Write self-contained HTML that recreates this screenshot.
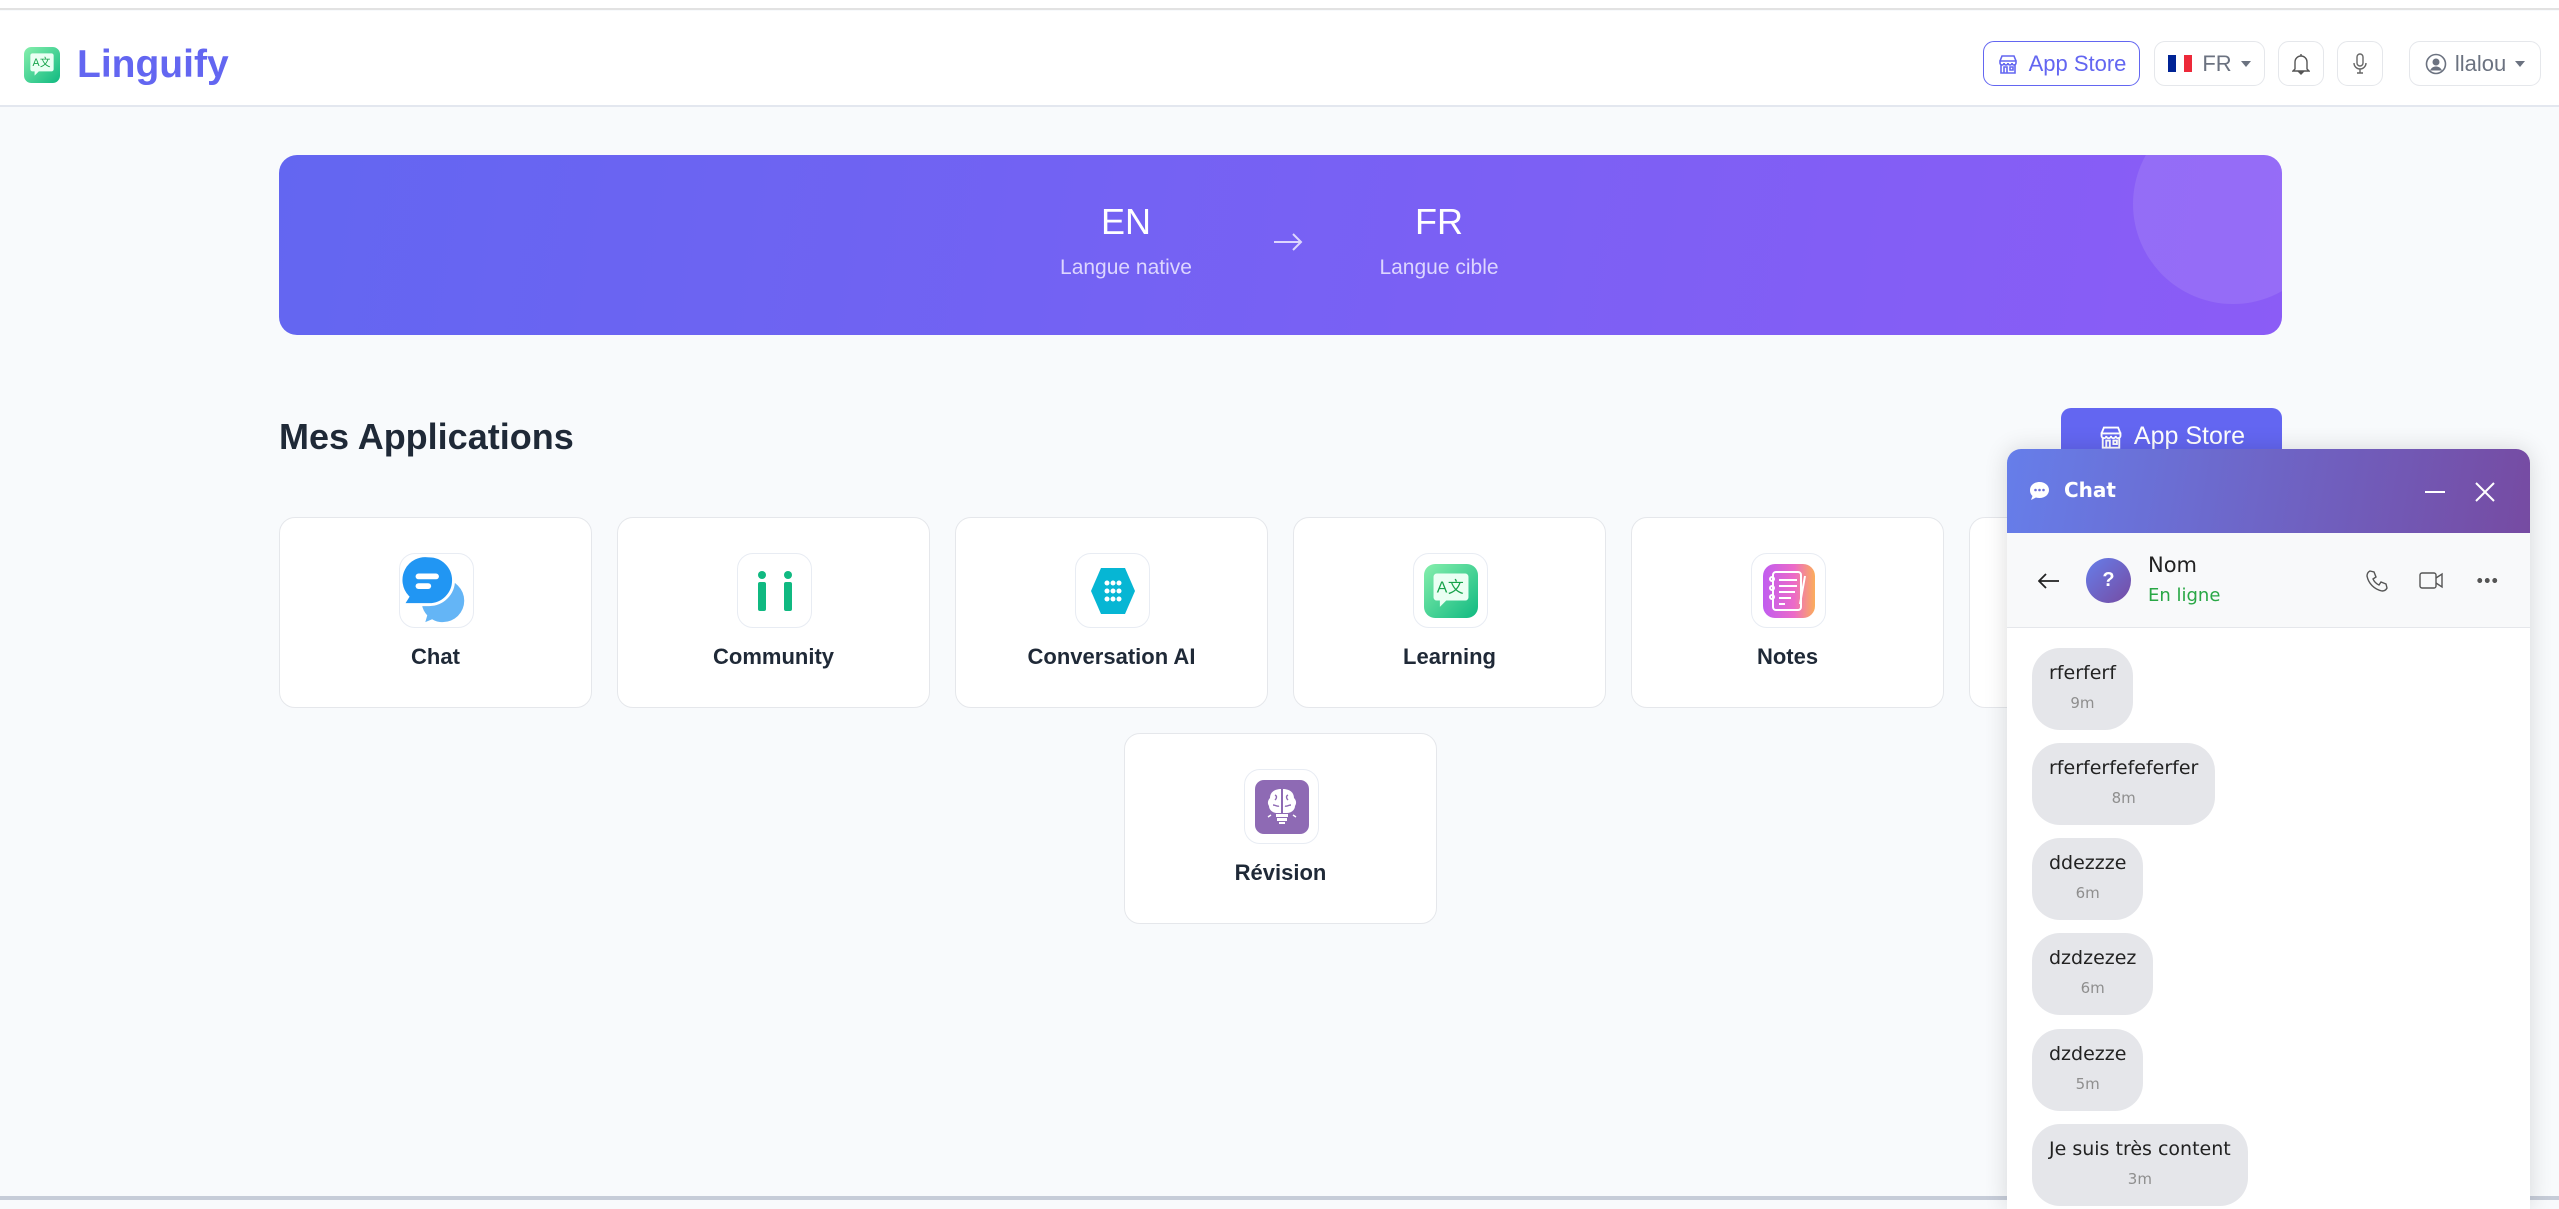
<!DOCTYPE html>
<html><head><meta charset="utf-8">
<style>
*{box-sizing:border-box;margin:0;padding:0}
body{width:2559px;height:1200px;overflow:hidden;background:#f8fafc;font-family:"Liberation Sans",sans-serif;position:relative}
.abs{position:absolute}
.topline{left:0;top:0;width:2559px;height:10px;background:#fff;border-bottom:2px solid #e2e2e2}
.hdr{left:0;top:11px;width:2559px;height:96px;background:#fff;border-bottom:2px solid #e3e7ef}
.btn{position:absolute;top:30px;height:45px;border:1.5px solid #e5e7eb;border-radius:11px;background:#fff;display:flex;align-items:center;justify-content:center;color:#6b7280;font-size:22px}
.banner{left:279px;top:155px;width:2003px;height:180px;border-radius:18px;background:linear-gradient(100deg,#6366f1,#8b5cf6);overflow:hidden}
.card{position:absolute;width:313px;height:191px;background:#fff;border:1.5px solid #e5e7eb;border-radius:16px}
.ib{position:absolute;left:119px;top:35px;width:75px;height:75px;border:1.5px solid #e8ecf3;border-radius:16px;display:flex;align-items:center;justify-content:center;background:#fff}
.lbl{position:absolute;left:0;right:0;top:126px;text-align:center;font-size:22px;font-weight:bold;color:#1f2937}
.chat{left:2007px;top:449px;width:523px;height:760px;background:#fff;border-radius:14px 14px 0 0;box-shadow:0 0 24px rgba(0,0,0,.14);overflow:hidden}
.bub{position:absolute;left:25px;height:82px;background:#e5e6ea;border-radius:28px;padding:0 17px;text-align:center;font-family:"DejaVu Sans","Liberation Sans",sans-serif}
.bub .t{font-size:19px;color:#222;margin-top:14px;white-space:nowrap}
.bub .m{font-size:15px;color:#8e8e8e;margin-top:10px}
.lang{position:absolute;width:240px;text-align:center}
</style></head><body>
<div class="abs topline"></div>
<div class="abs hdr">
  <svg class="abs" style="left:24px;top:36px" width="36" height="36" viewBox="0 0 34 34"><defs><linearGradient id="lg" x1="0" y1="0" x2="1" y2="1"><stop offset="0" stop-color="#86efac"/><stop offset="1" stop-color="#10b981"/></linearGradient></defs><rect width="34" height="34" rx="7" fill="url(#lg)"/><path d="M8 6h18a2 2 0 0 1 2 2v13a2 2 0 0 1-2 2H14l-4 4v-4H8a2 2 0 0 1-2-2V8a2 2 0 0 1 2-2z" fill="#eafff3"/><text x="8" y="18" font-size="10" fill="#16a34a" font-family="Liberation Sans">A</text><text x="15" y="18" font-size="10" fill="#16a34a" font-family="Noto Sans CJK SC">文</text></svg>
  <div class="abs" style="left:77px;top:32px;font-size:39px;font-weight:bold;color:#6366f1">Linguify</div>
  <div class="btn" style="left:1983px;width:157px;border-color:#6366f1;color:#6366f1"><svg width="22" height="22" viewBox="0 0 22 22" fill="none" stroke="#6366f1" stroke-width="1.6" style="margin-right:10px"><path d="M3 8l2-5h12l2 5M3 8h16v2a2 2 0 0 1-4 0 2 2 0 0 1-4 0 2 2 0 0 1-4 0 2 2 0 0 1-4 0zM4 11v9h14v-9M7 20v-6h3v6M13 14h3v3h-3z"/></svg>App Store</div>
  <div class="btn" style="left:2154px;width:111px"><span style="display:inline-block;width:8px;height:17px;background:#002395"></span><span style="display:inline-block;width:8px;height:17px;background:#fff"></span><span style="display:inline-block;width:8px;height:17px;background:#ed2939;margin-right:10px"></span>FR<span style="margin-left:9px;border:5px solid transparent;border-top:6px solid #6b7280;margin-top:6px"></span></div>
  <div class="btn" style="left:2278px;width:46px"><svg width="18" height="22" viewBox="0 0 18 22" fill="none" stroke="#555" stroke-width="1.4"><path d="M3 16V9a6 6 0 0 1 12 0v7l2 2H1zM9 1v2"/><path d="M7 19h4l-2 2z" fill="#555"/></svg></div>
  <div class="btn" style="left:2337px;width:46px"><svg width="16" height="22" viewBox="0 0 16 22" fill="none" stroke="#666" stroke-width="1.4"><rect x="5" y="1" width="6" height="12" rx="3"/><path d="M2 10a6 6 0 0 0 12 0M8 16v4M5 20h6"/></svg></div>
  <div class="btn" style="left:2409px;width:132px"><svg width="22" height="22" viewBox="0 0 22 22" style="margin-right:8px"><circle cx="11" cy="11" r="9.5" fill="none" stroke="#6b7280" stroke-width="1.6"/><circle cx="11" cy="9" r="3.5" fill="#6b7280"/><path d="M5 17.5c1.5-3 3.5-4 6-4s4.5 1 6 4" fill="#6b7280"/></svg>llalou<span style="margin-left:9px;border:5px solid transparent;border-top:6px solid #6b7280;margin-top:6px"></span></div>
</div>

<div class="abs banner">
  <div class="abs" style="left:1854px;top:-51px;width:200px;height:200px;border-radius:50%;background:rgba(255,255,255,.1)"></div>
  <div class="lang" style="left:727px;top:46px;color:#fff;font-size:36px">EN</div>
  <div class="lang" style="left:727px;top:101px;color:#ddd6fe;font-size:21px">Langue native</div>
  <svg class="abs" style="left:994px;top:77px" width="30" height="20" viewBox="0 0 30 20" fill="none" stroke="#ddd6fe" stroke-width="2"><path d="M1 10h27M20 2l8 8-8 8"/></svg>
  <div class="lang" style="left:1040px;top:46px;color:#fff;font-size:36px">FR</div>
  <div class="lang" style="left:1040px;top:101px;color:#ddd6fe;font-size:21px">Langue cible</div>
</div>

<div class="abs" style="left:279px;top:416px;font-size:36px;font-weight:bold;color:#1f2937">Mes Applications</div>
<div class="abs" style="left:2061px;top:408px;width:221px;height:57px;border-radius:10px;background:#6366f1;color:#fff;font-size:25px;display:flex;align-items:center;justify-content:center"><svg width="26" height="26" viewBox="0 0 22 22" fill="none" stroke="#fff" stroke-width="1.6" style="margin-right:10px"><path d="M3 8l2-5h12l2 5M3 8h16v2a2 2 0 0 1-4 0 2 2 0 0 1-4 0 2 2 0 0 1-4 0 2 2 0 0 1-4 0zM4 11v9h14v-9M7 20v-6h3v6M13 14h3v3h-3z"/></svg>App Store</div>

<div class="card" style="left:279px;top:517px"><div class="ib"><svg width="75" height="75" viewBox="0 0 75 75"><path d="M44 26a22 22 0 1 1 0 44c-4 0-8-1-11-3l-7 3 2-7a22 22 0 0 1 16-37z" fill="#64b5f6"/><path d="M30 2a25 25 0 1 1 0 50H3l5-8A25 25 0 0 1 30 2z" fill="#2196f3" stroke="#fff" stroke-width="3"/><rect x="16" y="20" width="24" height="6" rx="3" fill="#fff"/><rect x="16" y="30" width="16" height="6" rx="3" fill="#fff"/></svg></div><div class="lbl">Chat</div></div>
<div class="card" style="left:617px;top:517px"><div class="ib"><svg width="50" height="50" viewBox="0 0 50 50"><circle cx="12" cy="9" r="4" fill="#10b981"/><rect x="8" y="16" width="8" height="29" rx="2" fill="#10b981"/><circle cx="38" cy="9" r="4" fill="#10b981"/><rect x="34" y="16" width="8" height="29" rx="2" fill="#10b981"/></svg></div><div class="lbl">Community</div></div>
<div class="card" style="left:955px;top:517px"><div class="ib"><svg width="50" height="50" viewBox="0 0 50 50"><path d="M13 2h24l10 23-10 23H13L3 25z" fill="#06b6d4"/><g fill="#fff"><circle cx="19" cy="17" r="2.5"/><circle cx="25" cy="17" r="2.5"/><circle cx="31" cy="17" r="2.5"/><circle cx="19" cy="25" r="2.5"/><circle cx="25" cy="25" r="2.5"/><circle cx="31" cy="25" r="2.5"/><circle cx="19" cy="33" r="2.5"/><circle cx="25" cy="33" r="2.5"/><circle cx="31" cy="33" r="2.5"/></g></svg></div><div class="lbl">Conversation AI</div></div>
<div class="card" style="left:1293px;top:517px"><div class="ib"><svg width="54" height="54" viewBox="0 0 34 34"><defs><linearGradient id="lg2" x1="0" y1="0" x2="1" y2="1"><stop offset="0" stop-color="#86efac"/><stop offset="1" stop-color="#10b981"/></linearGradient></defs><rect width="34" height="34" rx="7" fill="url(#lg2)"/><path d="M8 6h18a2 2 0 0 1 2 2v13a2 2 0 0 1-2 2H14l-4 4v-4H8a2 2 0 0 1-2-2V8a2 2 0 0 1 2-2z" fill="#eafff3"/><text x="8" y="18" font-size="10" fill="#16a34a" font-family="Liberation Sans">A</text><text x="15" y="18" font-size="10" fill="#16a34a" font-family="Noto Sans CJK SC">文</text></svg></div><div class="lbl">Learning</div></div>
<div class="card" style="left:1631px;top:517px"><div class="ib"><svg width="52" height="54" viewBox="0 0 52 54"><defs><linearGradient id="ng" x1="0" y1="0" x2="1" y2="0"><stop offset="0" stop-color="#c05cf0"/><stop offset=".6" stop-color="#ec6ac8"/><stop offset="1" stop-color="#fbad5a"/></linearGradient></defs><rect width="52" height="54" rx="12" fill="url(#ng)"/><g fill="none" stroke="#fff" stroke-width="2"><rect x="10" y="8" width="28" height="38" rx="3"/><path d="M16 16h18M16 22h18M16 28h16M16 34h12M16 40h6M42 12l-5 28"/><circle cx="9" cy="15" r="2"/><circle cx="9" cy="24" r="2"/><circle cx="9" cy="33" r="2"/></g></svg></div><div class="lbl">Notes</div></div>
<div class="card" style="left:1969px;top:517px"></div>
<div class="card" style="left:1124px;top:733px"><div class="ib"><svg width="54" height="54" viewBox="0 0 54 54"><rect width="54" height="54" rx="9" fill="#8e6ab4"/><g fill="#fff"><path d="M26 9c-6 0-11 3-11 9-2 2-3 5-1 8 0 4 4 7 8 7h4z"/><path d="M28 9c6 0 11 3 11 9 2 2 3 5 1 8 0 4-4 7-8 7h-4z"/><rect x="21" y="34" width="12" height="3"/><rect x="22" y="38" width="10" height="3"/><rect x="24" y="42" width="6" height="2"/></g><g stroke="#8e6ab4" stroke-width="1.4" fill="none"><path d="M20 15c2 1 2 3 0 5M33 15c-2 1-2 3 0 5M18 25c3 0 4 2 6 1M36 25c-3 0-4 2-6 1"/></g><path d="M13 37l3-2M41 37l-3-2" stroke="#fff" stroke-width="1.4"/></svg></div><div class="lbl">Révision</div></div>

<div class="abs" style="left:0;top:1196px;width:2559px;height:4px;background:#c6ccd8"></div>

<div class="abs chat">
  <div class="abs" style="left:0;top:0;width:523px;height:84px;background:linear-gradient(100deg,#667eea,#764ba2)">
    <svg class="abs" style="left:22px;top:32px" width="21" height="20" viewBox="0 0 21 20"><path d="M10.5 1C16 1 20 4.5 20 9s-4 8-9.5 8c-1.3 0-2.5-.2-3.6-.5L2 19l1.5-4A7.6 7.6 0 0 1 1 9c0-4.5 4-8 9.5-8z" fill="#fff"/><circle cx="6.5" cy="9" r="1.3" fill="#6d70d8"/><circle cx="10.5" cy="9" r="1.3" fill="#6d70d8"/><circle cx="14.5" cy="9" r="1.3" fill="#6d70d8"/></svg>
    <div class="abs" style="left:57px;top:29px;color:#fff;font-size:20px;font-weight:bold;font-family:'DejaVu Sans',sans-serif">Chat</div>
    <div class="abs" style="left:418px;top:42px;width:20px;height:2px;background:#fff"></div>
    <svg class="abs" style="left:468px;top:33px" width="20" height="20" viewBox="0 0 20 20" stroke="#fff" stroke-width="2"><path d="M1 1l18 18M19 1L1 19"/></svg>
  </div>
  <div class="abs" style="left:0;top:84px;width:523px;height:95px;background:#f8f9fa;border-bottom:1px solid #e5e7eb">
    <svg class="abs" style="left:31px;top:40px" width="22" height="16" viewBox="0 0 22 16" fill="none" stroke="#222" stroke-width="1.8"><path d="M21 8H2M8 1L1 8l7 7"/></svg>
    <div class="abs" style="left:79px;top:25px;width:45px;height:45px;border-radius:50%;background:linear-gradient(135deg,#667eea,#764ba2);color:#fff;font-weight:bold;font-size:20px;text-align:center;line-height:45px">?</div>
    <div class="abs" style="left:141px;top:20px;font-size:21px;color:#222;font-family:'DejaVu Sans',sans-serif">Nom</div>
    <div class="abs" style="left:141px;top:52px;font-size:18px;color:#28a745;font-family:'DejaVu Sans',sans-serif">En ligne</div>
    <svg class="abs" style="left:358px;top:36px" width="24" height="24" viewBox="0 0 24 24" fill="none" stroke="#555" stroke-width="1.4"><path d="M5 2l4 1 2 5-3 2a12 12 0 0 0 6 6l2-3 5 2 1 4c-1 2-3 3-5 3A19 19 0 0 1 2 7c0-2 1-4 3-5z"/></svg>
    <svg class="abs" style="left:412px;top:38px" width="25" height="19" viewBox="0 0 25 19" fill="none" stroke="#555" stroke-width="1.4"><rect x="1" y="2" width="16" height="15" rx="2"/><path d="M17 7l6-4v13l-6-4"/></svg>
    <div class="abs" style="left:469px;top:45px;width:22px;height:5px;background:radial-gradient(circle,#555 2.3px,transparent 2.6px) 0 0/7.5px 5px"></div>
  </div>
  <div class="bub" style="top:199px"><div class="t">rferferf</div><div class="m">9m</div></div>
  <div class="bub" style="top:294px"><div class="t">rferferfefeferfer</div><div class="m">8m</div></div>
  <div class="bub" style="top:389px"><div class="t">ddezzze</div><div class="m">6m</div></div>
  <div class="bub" style="top:484px"><div class="t">dzdzezez</div><div class="m">6m</div></div>
  <div class="bub" style="top:580px"><div class="t">dzdezze</div><div class="m">5m</div></div>
  <div class="bub" style="top:675px"><div class="t">Je suis très content</div><div class="m">3m</div></div>
</div>
</body></html>
